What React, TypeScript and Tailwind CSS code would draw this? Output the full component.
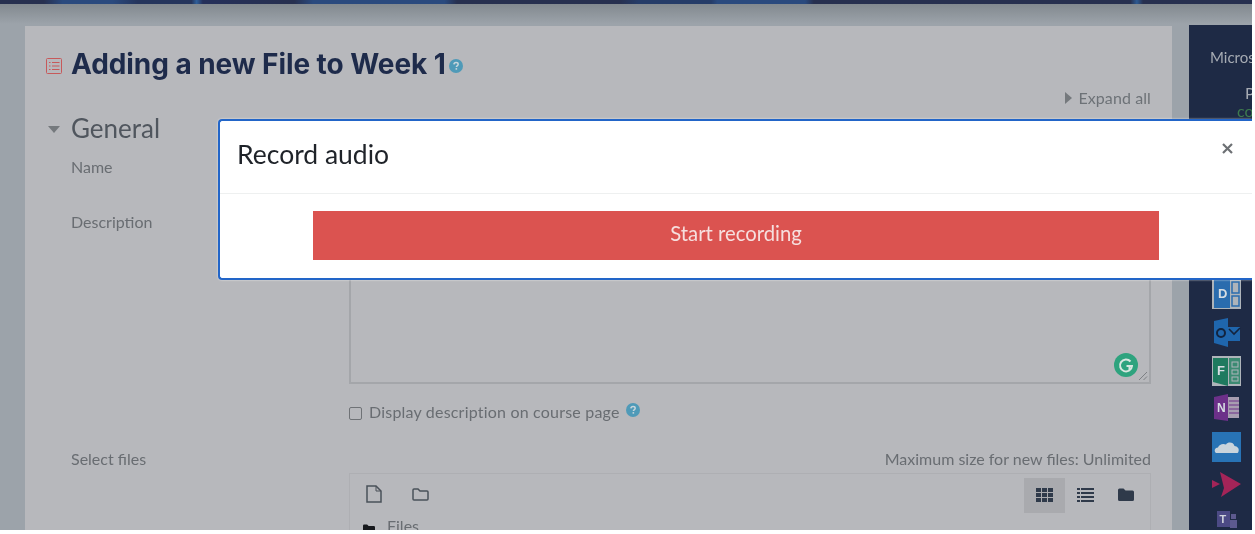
import React from "react";

const Help = ({ size, className = "" }: { size: number; className?: string }) => (
  <svg width={size} height={size} viewBox="0 0 16 16" className={className}>
    <circle cx="8" cy="8" r="8" fill="#4f9ab8" />
    <path d="M5.6 6.2C5.7 4.8 6.7 4 8.1 4c1.4 0 2.4.8 2.4 2 0 1-.6 1.5-1.3 2-.5.3-.7.6-.7 1.2" fill="none" stroke="#c9d6dc" strokeWidth="1.7" />
    <rect x="7.5" y="10.4" width="1.8" height="1.8" fill="#c9d6dc" />
  </svg>
);

const Row = ({ label, className = "", children }: { label: string; className?: string; children?: React.ReactNode }) => (
  <div className={`flex ${className}`}>
    <div className="w-[278px] shrink-0 text-[16px] leading-5 text-[#696d72]">{label}</div>
    <div className="flex-1">{children}</div>
  </div>
);

const Tile = ({ className = "", children }: { className?: string; children: React.ReactNode }) => (
  <svg width="30" height="30" viewBox="0 0 30 30" className={className}>{children}</svg>
);

const AppIcons = () => (
  <div className="flex flex-col items-start gap-[8px] pl-[23px]">
    <Tile>
      <rect x="0" y="0" width="29" height="29" fill="#aeb4ba" />
      <rect x="2" y="0" width="16" height="28" fill="#2a6cae" />
      <rect x="20" y="2" width="7" height="11" fill="none" stroke="#2a6cae" strokeWidth="1.500" />
      <rect x="20" y="16" width="7" height="10" fill="none" stroke="#2a6cae" strokeWidth="1.500" />
      <text x="6" y="18" fontSize="13" fontWeight="700" fill="#d6dde3" fontFamily="Liberation Sans, sans-serif">D</text>
    </Tile>
    <Tile>
      <path d="M2 3 16 0v29L2 25z" fill="#1f66ad" />
      <path d="M16 9h12v14H16z" fill="#1f66ad" />
      <path d="M17 11l5 5 6-6" fill="none" stroke="#14233d" strokeWidth="1.600" />
      <circle cx="9" cy="15" r="4" fill="none" stroke="#12243f" strokeWidth="2" />
    </Tile>
    <Tile>
      <rect x="0" y="0" width="29" height="30" fill="#aeb4ba" />
      <path d="M1 2h15v28L1 26z" fill="#1e7a5f" />
      <rect x="17" y="2" width="11" height="26" fill="#3c8a72" />
      <rect x="20" y="6" width="6" height="5" fill="none" stroke="#aeb4ba" strokeWidth="1" />
      <rect x="20" y="14" width="6" height="4" fill="none" stroke="#aeb4ba" strokeWidth="1" />
      <rect x="20" y="21" width="6" height="4" fill="none" stroke="#aeb4ba" strokeWidth="1" />
      <text x="5" y="19" fontSize="13" fontWeight="700" fill="#d6dde3" fontFamily="Liberation Sans, sans-serif">F</text>
    </Tile>
    <Tile>
      <path d="M2 3 16 0v27L2 25z" fill="#6c3089" />
      <rect x="16" y="3" width="11" height="21" fill="#a79db0" />
      <path d="M17 7h10M17 11h10M17 15h10M17 19h10" stroke="#6c3089" strokeWidth="1" />
      <text x="5" y="18" fontSize="12" fontWeight="700" fill="#d6dde3" fontFamily="Liberation Sans, sans-serif">N</text>
    </Tile>
    <Tile>
      <rect x="0" y="0" width="29" height="30" fill="#2873b5" />
      <path d="M4 21c-2.500-2.200-1-5.500 2-5.500 1-3.200 5-4.500 8-3 2-3 7.500-2.500 8.500 1.500 3 .3 5 2.700 4 5.500-.3 1-.8 1.500-1.500 1.500z" fill="#c9d4dc" />
    </Tile>
    <Tile>
      <path d="M8 2 29 14 9 27l3-9-1-4-1-4z" fill="#a42458" />
      <path d="M0 10l8 4-8 4z" fill="#a42458" />
    </Tile>
    <Tile>
      <rect x="19" y="6" width="5" height="5" fill="#5d5a8f" />
      <rect x="5" y="3" width="13" height="16" fill="#4c4a85" />
      <rect x="18" y="12" width="7" height="8" fill="#5d5a8f" />
      <text x="7.500" y="15" fontSize="11" fontWeight="700" fill="#cfd3dc" fontFamily="Liberation Sans, sans-serif">T</text>
    </Tile>
  </div>
);

export default function App() {
  return (
    <div className="relative h-[534px] w-[1255px] overflow-hidden bg-white font-['Lato','Liberation_Sans',sans-serif] blur-[0.4px]">
      <div className="flex h-[530px] w-[1252px] flex-col overflow-hidden bg-[#9ea5ac]">
        <div className="h-[4px] shrink-0 bg-[linear-gradient(90deg,#27304f_0%,#27304f_3.500%,#2a4a7e_5%,#2a4a7e_9%,#25355c_11%,#25355c_15.300%,#2f5f99_15.700%,#25305a_16.200%,#27304f_23.500%,#2a4a7e_25%,#2a4a7e_35.500%,#27304f_36.500%,#27304f_49.500%,#253c68_51%,#253c68_56.800%,#2a4a7e_57.300%,#2a4a7e_64.300%,#27304f_65%,#27304f_90.300%,#2d5a92_90.800%,#27304f_91.300%,#27304f_100%)]" />
        <div className="flex flex-1 bg-[linear-gradient(180deg,#82898f_0px,#9ca3aa_20px)] pl-[25px]">
          <main className="mt-[22px] w-[1147px] shrink-0 bg-[#b7b8bc] pl-[21px] pr-[21px]">
            <header className="mt-[22px] flex h-[32px] items-center">
              <svg width="16" height="16" viewBox="0 0 16 16" fill="none" stroke="#c7595a" strokeWidth="1" className="mr-[9px] mt-[3px]">
                <rect x="0.500" y="0.500" width="15" height="15" rx="1" />
                <path d="M3 4.500h1.500M6 4.500h7.500M3 8h1.500M6 8h7.500M3 11.500h1.500M6 11.500h7.500" strokeWidth="1.200" />
              </svg>
              <h1 className="font-['Inter',sans-serif] text-[28px] font-bold tracking-[-0.07px] text-[#1e2b4b]">Adding a new File to Week 1</h1>
              <Help size={14} className="ml-[3px] mt-[3px]" />
            </header>
            <div className="mt-[8px] flex justify-end text-[16px] leading-5 text-[#6d7277]">
              <span className="flex items-center gap-[6px] tracking-[0.1px]">
                <svg width="7" height="12" viewBox="0 0 7 12"><path d="M0 0l7 6-7 6z" fill="#75797d" /></svg>
                Expand all
              </span>
            </div>
            <div className="mt-[3px] flex items-center pl-[2px]">
              <svg width="12" height="7" viewBox="0 0 12 7" className="mr-[11px] mt-[3px]"><path d="M0 0h12L6 7z" fill="#75797d" /></svg>
              <h2 className="text-[26px] leading-[34px] text-[#50565e]">General</h2>
            </div>
            <div className="pl-[25px]">
              <Row label="Name" className="mt-[12px]" />
              <Row label="Description" className="mt-[35px]">
                <div className="relative h-[172px] border-2 border-[#a4a6aa]">
                  <svg width="24" height="24" viewBox="0 0 24 24" className="absolute bottom-[5px] right-[11px]">
                    <circle cx="12" cy="12" r="12" fill="#2ea37e" />
                    <path d="M16.500 8.500A6 6 0 1 0 18 13h-5.500" fill="none" stroke="#d8e6e0" strokeWidth="2" />
                    <path d="M15.500 13v4" stroke="#d8e6e0" strokeWidth="2" />
                  </svg>
                  <svg width="10" height="10" viewBox="0 0 10 10" className="absolute bottom-[1px] right-[1px]">
                    <path d="M1 9l8-8M5.500 9L9 5.500" stroke="#7d8084" strokeWidth="1" />
                  </svg>
                </div>
                <div className="mt-[18px] flex items-center text-[16px] leading-5 tracking-[0.2px] text-[#696d72]">
                  <span className="mr-[7px] mt-[2px] h-[13px] w-[13px] rounded-[2px] border border-[#6f7276]" />
                  Display description on course page
                  <Help size={14} className="mb-[4px] ml-[6px]" />
                </div>
              </Row>
              <Row label="Select files" className="mt-[27px]">
                <div className="text-right text-[16px] leading-5 text-[#696d72]">Maximum size for new files: Unlimited</div>
                <div className="mt-[4px] h-[80px] border border-[#aeafb3] pl-[9px] pr-[3px] pt-[4px]">
                  <div className="flex items-center justify-between">
                    <div className="-mt-[4px] flex items-center gap-[30px] pl-[7px] text-[#4a5159]">
                      <svg width="16" height="18" viewBox="0 0 16 18" fill="none" stroke="currentColor" strokeWidth="1.500"><path d="M1 1h9l5 5v11H1z" /><path d="M10 1v5h5" strokeWidth="1" /></svg>
                      <svg width="17" height="14" viewBox="0 0 17 14" fill="none" stroke="currentColor" strokeWidth="1.500"><path d="M1 3a1 1 0 0 1 1-1h4l2 2h7a1 1 0 0 1 1 1v7a1 1 0 0 1-1 1H2a1 1 0 0 1-1-1z" /></svg>
                    </div>
                    <div className="flex items-center text-[#2f3a4a]">
                      <div className="flex h-[35px] w-[41px] items-center justify-center bg-[#a9aaae]">
                        <svg width="17" height="14" viewBox="0 0 17 14" fill="currentColor" className="-mt-[2px]"><path d="M0 0h5v4H0zM6 0h5v4H6zM12 0h5v4h-5zM0 5h5v4H0zM6 5h5v4H6zM12 5h5v4h-5zM0 10h5v4H0zM6 10h5v4H6zM12 10h5v4h-5z" /></svg>
                      </div>
                      <div className="flex h-[35px] w-[41px] items-center justify-center">
                        <svg width="17" height="14" viewBox="0 0 17 14" fill="currentColor" className="-mt-[2px]"><path d="M0 0h3v2H0zM4 0h13v2H4zM0 4h3v2H0zM4 4h13v2H4zM0 8h3v2H0zM4 8h13v2H4zM0 12h3v2H0zM4 12h13v2H4z" /></svg>
                      </div>
                      <div className="flex h-[35px] w-[41px] items-center justify-center pr-[2px]">
                        <svg width="16" height="13" viewBox="0 0 16 13" fill="currentColor" className="-mt-[2px]"><path d="M0 2a1.500 1.500 0 0 1 1.500-1.500h4L7.500 2.500h7A1.500 1.500 0 0 1 16 4v7.500a1.500 1.500 0 0 1-1.500 1.500h-13A1.500 1.500 0 0 1 0 11.500z" /></svg>
                      </div>
                    </div>
                  </div>
                  <div className="mt-[3px] flex items-center gap-[12px] pl-[4px] text-[16px] leading-5 text-[#696d72]">
                    <svg width="12" height="10" viewBox="0 0 16 13" fill="#17191d" className="mt-[5px]"><path d="M0 2a1.500 1.500 0 0 1 1.500-1.500h4L7.500 2.500h7A1.500 1.500 0 0 1 16 4v7.500a1.500 1.500 0 0 1-1.500 1.500h-13A1.500 1.500 0 0 1 0 11.500z" /></svg>
                    Files
                  </div>
                </div>
              </Row>
            </div>
          </main>
          <aside className="ml-[17px] mt-[21px] flex-1 overflow-hidden bg-[#1e2a45]">
            <div className="h-[255px] pt-[22px] text-[16px] leading-5 text-[#a6abb3]">
              <div className="whitespace-nowrap pl-[21px] text-[15px]">Microsoft</div>
              <div className="whitespace-nowrap pl-[56px] pt-[16px]">P</div>
              <div className="-mt-[2px] whitespace-nowrap pl-[48px] text-[#3d7a4e]">co</div>
            </div>
            <AppIcons />
          </aside>
        </div>
      </div>

      <section className="absolute left-[218px] top-[119px] flex h-[161px] w-[1034px] flex-col rounded-l-[4px] border-2 border-r-0 border-[#2265c8] bg-white shadow-[0_0_2px_rgba(255,255,255,0.8)]">
        <div className="flex h-[73px] shrink-0 items-center justify-between border-b border-[#eef0f0] pl-[17px] pr-[19px]">
          <h3 className="-mt-[5px] text-[26.500px] text-[#1f2329]">Record audio</h3>
          <svg width="11" height="11" viewBox="0 0 11 11" className="mb-[17px]"><path d="M1 1l9 9M10 1l-9 9" stroke="#6d7074" strokeWidth="2.200" /></svg>
        </div>
        <div className="flex flex-1 justify-center pl-[93px] pr-[93px] pt-[17px]">
          <button className="h-[49px] w-full bg-[#db5350] pb-[5px] text-[20.300px] text-[#f6dfde]">Start recording</button>
        </div>
      </section>
    </div>
  );
}
